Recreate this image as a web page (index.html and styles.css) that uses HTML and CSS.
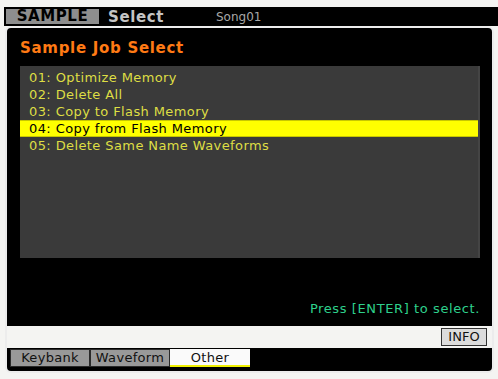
FILE: index.html
```html
<!DOCTYPE html>
<html>
<head>
<meta charset="utf-8">
<link rel="stylesheet" href="styles.css">
</head>
<body>
<div class="screen">
  <div class="header">
    <span class="mode">SAMPLE</span>
    <span class="page">Select</span>
    <span class="song">Song01</span>
  </div>
  <div class="frame">
    <div class="title">Sample Job Select</div>
    <div class="panel">
      <ul class="jobs">
        <li>01: Optimize Memory</li>
        <li>02: Delete All</li>
        <li>03: Copy to Flash Memory</li>
        <li class="sel">04: Copy from Flash Memory</li>
        <li>05: Delete Same Name Waveforms</li>
      </ul>
    </div>
    <div class="msg">Press [ENTER] to select.</div>
    <div class="infobar"><span class="info">INFO</span></div>
    <div class="tabs">
      <span class="tab">Keybank</span>
      <span class="tab">Waveform</span>
      <span class="tab active">Other</span>
    </div>
  </div>
</div>
</body>
</html>
```
FILE: styles.css
```css
html, body {
  margin: 0;
  padding: 0;
  background: #f4f4f2;
}
body {
  width: 498px;
  height: 379px;
  overflow: hidden;
  font-family: "DejaVu Sans", sans-serif;
}
.screen {
  padding-top: 7px;
}
.header {
  margin-left: 4px;
  height: 19px;
  background: #000;
  display: flex;
  align-items: center;
}
.mode {
  margin-left: 2px;
  width: 93px;
  height: 15px;
  background: #8e8e8e;
  color: #000;
  font-weight: bold;
  font-size: 15px;
  line-height: 15px;
  text-align: center;
  letter-spacing: 0.6px;
}
.page {
  margin-left: 9px;
  color: #c4c4c4;
  font-weight: bold;
  font-size: 15px;
  letter-spacing: 0.6px;
}
.song {
  margin-left: 52px;
  color: #a8a8a8;
  font-size: 12px;
}
.frame {
  margin-left: 5px;
  width: 489px;
  height: 347px;
  box-sizing: border-box;
  border: 2px solid #ececec;
  border-radius: 6px;
  background: #000;
  display: flex;
  flex-direction: column;
  overflow: hidden;
}
.title {
  height: 38px;
  padding-left: 13px;
  display: flex;
  align-items: center;
  padding-top: 2px;
  box-sizing: border-box;
  color: #ff7a14;
  font-weight: bold;
  font-size: 15px;
  letter-spacing: 0.7px;
}
.panel {
  margin: 0 12px 0 13px;
  height: 192px;
  background: #3a3a3a;
  border-right: 2px solid #444;
  box-sizing: border-box;
}
.jobs {
  list-style: none;
  margin: 0;
  padding: 3px 0 0 0;
}
.jobs li {
  height: 17px;
  line-height: 17px;
  padding-left: 9px;
  color: #dede44;
  font-size: 13px;
  letter-spacing: 0.4px;
  box-sizing: border-box;
}
.jobs li.sel {
  background: #ffff00;
  color: #000;
  border-top: 1px solid #c8c800;
  border-bottom: 1px solid #c8c800;
  line-height: 15px;
}
.msg {
  height: 68px;
  box-sizing: border-box;
  display: flex;
  justify-content: flex-end;
  align-items: flex-end;
  padding: 0 12px 10px 0;
  color: #2ed08c;
  font-size: 13px;
  letter-spacing: 0.6px;
}
.infobar {
  height: 22px;
  background: #f4f4f2;
  display: flex;
  justify-content: flex-end;
  align-items: center;
  padding-right: 5px;
}
.info {
  width: 46px;
  height: 18px;
  box-sizing: border-box;
  border: 1px solid #333;
  background: #dcdcdc;
  color: #111;
  font-size: 13px;
  line-height: 16px;
  text-align: center;
}
.tabs {
  height: 19px;
  padding: 1px 0 0 3px;
  box-sizing: border-box;
  display: flex;
}
.tab {
  width: 80px;
  height: 18px;
  box-sizing: border-box;
  background: #999;
  border: 1px solid #2a2a2a;
  color: #111;
  font-size: 13px;
  letter-spacing: 0.3px;
  line-height: 16px;
  text-align: center;
}
.tab.active {
  background: #fafafa;
  border: none;
  border-bottom: 2px solid #f0f000;
  line-height: 17px;
}
```
